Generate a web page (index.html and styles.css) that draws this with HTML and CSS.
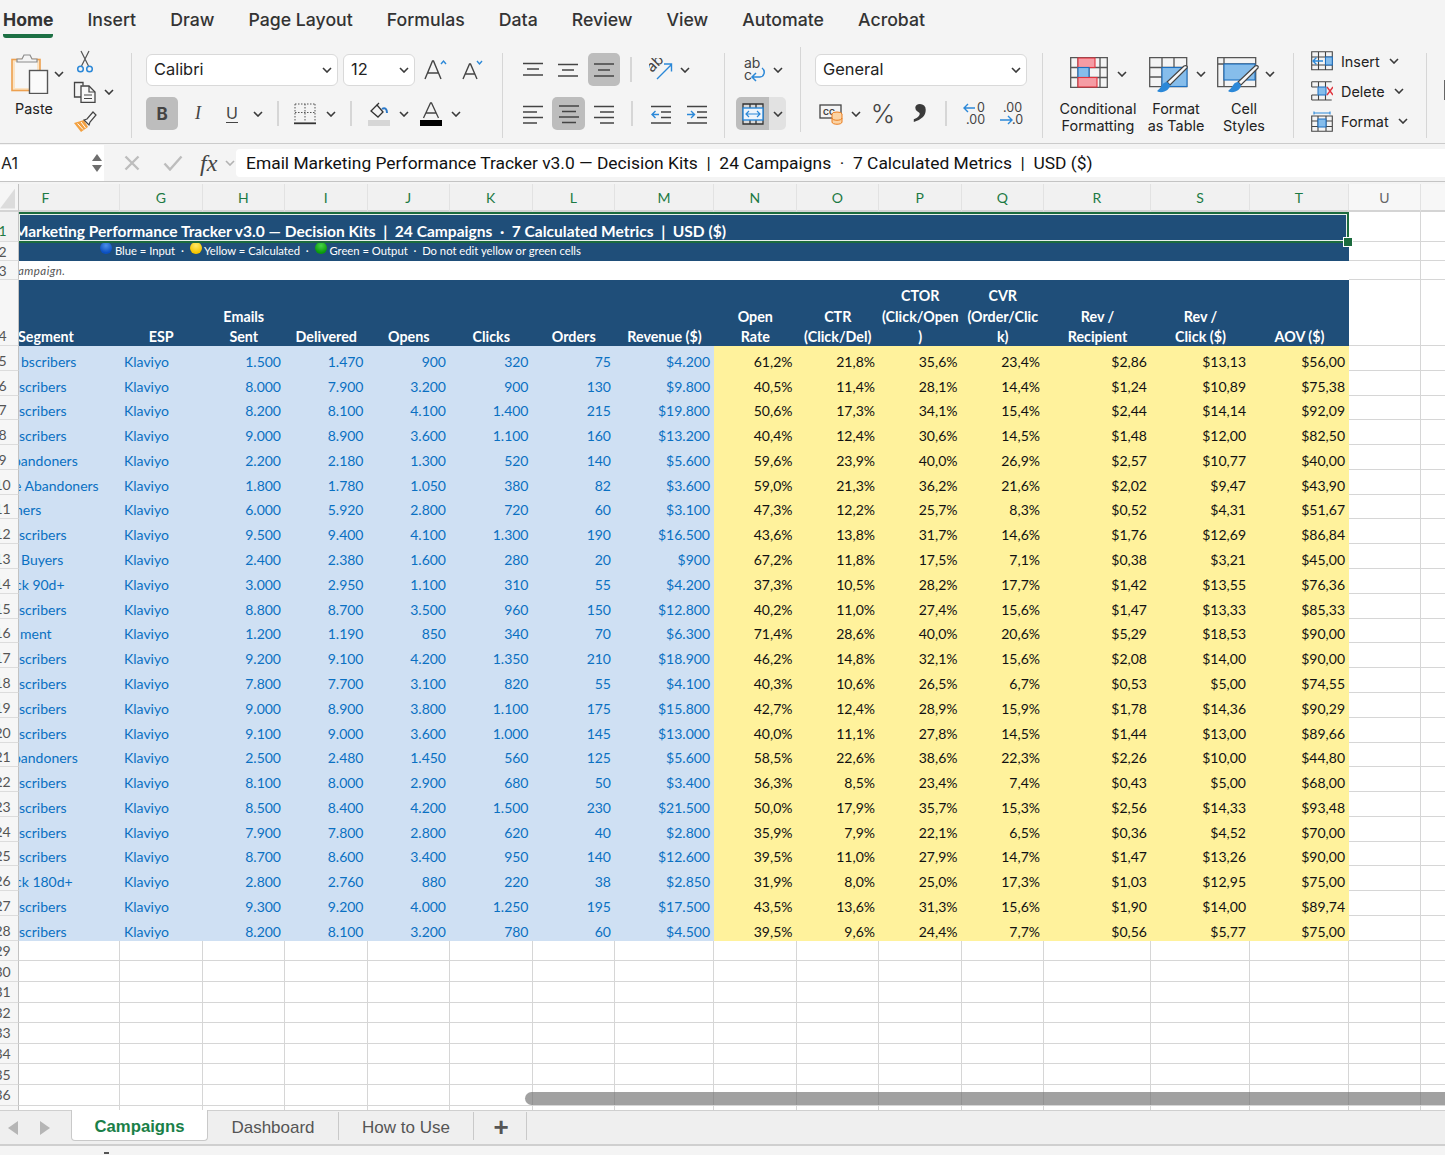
FILE: index.html
```html
<!DOCTYPE html>
<html lang="en">
<head>
<meta charset="utf-8">
<title>Email Marketing Performance Tracker</title>
<link rel="stylesheet" href="styles.css">
</head>
<body>
<svg class="defs" aria-hidden="true"><symbol id="cv" viewBox="0 0 10 6"><path d="M1 1l4 4 4-4" fill="none" stroke="#3a3a3a" stroke-width="1.6"/></symbol></svg>

<nav class="tabs">
  <span class="tab on">Home</span><span class="tab">Insert</span><span class="tab">Draw</span><span class="tab">Page Layout</span><span class="tab">Formulas</span><span class="tab">Data</span><span class="tab">Review</span><span class="tab">View</span><span class="tab">Automate</span><span class="tab">Acrobat</span>
</nav>

<section class="ribbon">
  <div class="grp g-clip">
    <div class="paste">
      <div class="paste-top">
        <svg width="38" height="41" viewBox="0 0 38 41"><rect x="1" y="6.5" width="28" height="31" fill="#fbe3c4" stroke="#eda04f" stroke-width="1.6"/><rect x="4" y="9" width="22" height="26" fill="#f7f7f7"/><path d="M6 9V6h5l2-4h6l2 4h5v3z" fill="#f4f4f4" stroke="#8b8b8b" stroke-width="1.2"/><rect x="18.5" y="17.5" width="18" height="23" fill="#fafafa" stroke="#555" stroke-width="1.4"/></svg>
        <svg class="cv"><use href="#cv"/></svg>
      </div>
      <span class="lbl">Paste</span>
    </div>
    <div class="tools">
      <div class="tool"><svg width="18" height="24" viewBox="0 0 18 24"><path d="M5 1l7.5 15M13 1L5.500 16" fill="none" stroke="#555" stroke-width="1.2"/><circle cx="4.500" cy="19" r="2.800" fill="none" stroke="#2b88d8" stroke-width="1.500"/><circle cx="13.500" cy="19" r="2.800" fill="none" stroke="#2b88d8" stroke-width="1.500"/></svg></div>
      <div class="tool"><svg width="24" height="22" viewBox="0 0 24 22"><path d="M8 16H1.500V1.500H10v3" fill="none" stroke="#444" stroke-width="1.300"/><path d="M8 5h8l6 6v10.500H8z" fill="#f7f7f7" stroke="#444" stroke-width="1.300"/><path d="M16 5v6h6M11 14h8M11 17.500h8" fill="none" stroke="#444" stroke-width="1.200"/></svg><svg class="cv"><use href="#cv"/></svg></div>
      <div class="tool"><svg width="24" height="22" viewBox="0 0 24 22"><path d="M1 12l10-3 4 7-7 5z" fill="#f3a141"/><path d="M4.500 12.500l5.500 6M8 11l4.500 6" stroke="#fff" stroke-width="1"/><path d="M11 9l3-1 6-7 3 3-6 7-1 3z" fill="#f7f7f7" stroke="#444" stroke-width="1.200"/></svg></div>
    </div>
  </div>

  <div class="grp g-font">
    <div class="row font1">
      <div class="sel s192"><span>Calibri</span><svg class="cv"><use href="#cv"/></svg></div>
      <div class="sel"><span>12</span><svg class="cv"><use href="#cv"/></svg></div>
      <div class="ic"><svg width="24" height="24" viewBox="0 0 24 24"><path d="M1 21L8.500 3h1L17 21M4 15h10" fill="none" stroke="#444" stroke-width="1.400"/><path d="M17 6l2.500-3L22 6" fill="none" stroke="#2b88d8" stroke-width="1.400"/></svg></div>
      <div class="ic"><svg width="22" height="22" viewBox="0 0 22 22"><path d="M1 20L7.500 5h1L15 20M3.500 15h9" fill="none" stroke="#444" stroke-width="1.400"/><path d="M15 2l2.500 3L20 2" fill="none" stroke="#2b88d8" stroke-width="1.400"/></svg></div>
    </div>
    <div class="row font2">
      <div class="ic btn"><b class="bold">B</b></div>
      <div class="ic"><i class="ital">I</i></div>
      <div class="ic"><span class="undl">U</span></div>
      <div class="ic"><svg class="cv"><use href="#cv"/></svg></div>
      <div class="ic"><span class="vsep"></span></div>
      <div class="ic"><svg width="22" height="22" viewBox="0 0 22 22"><path d="M1 1h20M1 1v17M21 1v17M11 1v17M1 9.500h20" fill="none" stroke="#555" stroke-dasharray="1.500 1.500"/><path d="M0 20.300h22" stroke="#333" stroke-width="1.800"/></svg></div>
      <div class="ic"><svg class="cv"><use href="#cv"/></svg></div>
      <div class="ic"><span class="vsep"></span></div>
      <div class="ic"><svg width="22" height="24" viewBox="0 0 22 24"><path d="M3 9l6-6 6 7-5 5z" fill="none" stroke="#333" stroke-width="1.300"/><path d="M9 3l2-2" stroke="#333" stroke-width="1.300"/><path d="M14 7c3-2 5 0 5 4" fill="none" stroke="#2b78c8" stroke-width="2"/><rect y="18" width="22" height="6" fill="#d6d6d6"/></svg></div>
      <div class="ic"><svg class="cv"><use href="#cv"/></svg></div>
      <div class="ic"><svg width="22" height="24" viewBox="0 0 22 24"><path d="M3.500 16L10.500 1h1L18.500 16M6 11h10" fill="none" stroke="#444" stroke-width="1.300"/><rect y="18" width="22" height="6" fill="#000"/></svg></div>
      <div class="ic"><svg class="cv"><use href="#cv"/></svg></div>
    </div>
  </div>

  <div class="grp g-align">
    <div class="row al1">
      <div class="ic"><svg class="lines" viewBox="0 0 20 20"><path d="M0 3.500h20M4 9h12M0 15h20"/></svg></div>
      <div class="ic"><svg class="lines" viewBox="0 0 20 20"><path d="M0 4.500h20M4 10h12M0 16h20"/></svg></div>
      <div class="ic btn"><svg class="lines" viewBox="0 0 20 20"><path d="M0 4h20M4 10h12M0 16h20"/></svg></div>
      <div class="ic"><span class="vsep"></span></div>
      <div class="ic"><svg width="24" height="24" viewBox="0 0 24 24"><text class="rot" x="3" y="15" transform="rotate(-45 3 15)">ab</text><path d="M8 21L22 7M15 6h7.500v7.500" fill="none" stroke="#2b88d8" stroke-width="1.400"/></svg></div>
      <div class="ic"><svg class="cv"><use href="#cv"/></svg></div>
    </div>
    <div class="row al2">
      <div class="ic"><svg class="lines" viewBox="0 0 20 20"><path d="M0 2.500h20M0 8h14M0 13.500h20M0 19h14"/></svg></div>
      <div class="ic btn"><svg class="lines" viewBox="0 0 20 20"><path d="M0 2h20M3 7.500h14M0 13h20M3 18.500h14"/></svg></div>
      <div class="ic"><svg class="lines" viewBox="0 0 20 20"><path d="M0 2.500h20M6 8h14M0 13.500h20M6 19h14"/></svg></div>
      <div class="ic"><span class="vsep"></span></div>
      <div class="ic"><svg class="lines" viewBox="0 0 20 20"><path d="M0 2.500h20M10 8h10M10 13.500h10M0 19h20"/><path class="blue" d="M8 10.500H1M4.500 7l-3.500 3.500L4.500 14"/></svg></div>
      <div class="ic"><svg class="lines" viewBox="0 0 20 20"><path d="M0 2.500h20M10 8h10M10 13.500h10M0 19h20"/><path class="blue" d="M0 10.500h7M4 7l3.500 3.500L4 14"/></svg></div>
    </div>
  </div>

  <div class="grp g-wrap">
    <div class="row wr1">
      <div class="ic"><svg width="24" height="26" viewBox="0 0 24 26"><text class="wraptx" x="1" y="11">ab</text><text class="wraptx" x="1" y="23">c</text><path d="M19 11c4 3 2 9-2 9H9M13 16l-4 4 4 4" fill="none" stroke="#2b88d8" stroke-width="1.500"/></svg></div>
      <div class="ic"><svg class="cv"><use href="#cv"/></svg></div>
    </div>
    <div class="row wr2">
      <div class="ic btn merge"><svg width="22" height="22" viewBox="0 0 22 22"><path d="M1 1h20v20H1zM8 1v4M14 1v4M8 17v4M14 17v4" fill="#d9d9d9" stroke="#333" stroke-width="1.300"/><rect x="1" y="5" width="20" height="12" fill="#eef5fc" stroke="#2b88d8" stroke-width="1.400"/><path d="M4 11h14M7 8l-3 3 3 3M15 8l3 3-3 3" fill="none" stroke="#2b88d8" stroke-width="1.200"/></svg></div>
      <div class="ic mergec"><svg class="cv"><use href="#cv"/></svg></div>
    </div>
  </div>

  <div class="grp g-num">
    <div class="row"><div class="sel wide"><span>General</span><svg class="cv"><use href="#cv"/></svg></div></div>
    <div class="row num2">
      <div class="ic"><svg width="24" height="22" viewBox="0 0 24 22"><rect x="1" y="2" width="21" height="13" fill="none" stroke="#444" stroke-width="1.300"/><text class="cur" x="4" y="12">CC</text><ellipse cx="18" cy="11" rx="5" ry="2" fill="#fbd3a4" stroke="#ea7d1e"/><path d="M13 11v8c0 3 10 3 10 0v-8" fill="#fbd3a4" stroke="#ea7d1e"/><path d="M13 15c0 3 10 3 10 0" fill="none" stroke="#ea7d1e"/></svg></div>
      <div class="ic"><svg class="cv"><use href="#cv"/></svg></div>
      <div class="ic"><span class="pct">%</span></div>
      <div class="ic"><svg class="cm" width="12" height="20" viewBox="0 0 12 20"><text class="commatx" x="0" y="9">,</text></svg></div>
      <div class="ic"><span class="vsep"></span></div>
      <div class="ic"><svg width="24" height="24" viewBox="0 0 24 24"><text class="dec" x="15" y="10">0</text><text class="dec" x="4" y="22">.00</text><path d="M13 6H2M6 2L2 6l4 4" fill="none" stroke="#2b88d8" stroke-width="1.400"/></svg></div>
      <div class="ic"><svg width="24" height="24" viewBox="0 0 24 24"><text class="dec" x="4" y="10">.00</text><text class="dec" x="13" y="22">.0</text><path d="M1 18h12M9 14l4 4-4 4" fill="none" stroke="#2b88d8" stroke-width="1.400"/></svg></div>
    </div>
  </div>

  <div class="grp g-styles">
    <div class="stl s-cond">
      <div class="stl-top">
        <svg width="38" height="31" viewBox="0 0 38 31"><path d="M.7.700h36.600v29.600H.7zM.7 10.500h36.600M.7 20.500h36.600M8 .7v29.600M19 .7v29.600M30 .7v29.600" fill="none" stroke="#555" stroke-width="1.300"/><rect x="8" y="1" width="17" height="9.500" fill="#f59ca4" stroke="#e0343e" stroke-width="1.100"/><rect x="8" y="10.500" width="11" height="10" fill="#86bdeb" stroke="#1d6fc0" stroke-width="1.100"/><rect x="8" y="20.500" width="19" height="9.500" fill="#f59ca4" stroke="#e0343e" stroke-width="1.100"/></svg>
        <svg class="cv"><use href="#cv"/></svg>
      </div>
      <span class="lbl">Conditional<br>Formatting</span>
    </div>
    <div class="stl s-tbl">
      <div class="stl-top">
        <svg width="41" height="38" viewBox="0 0 41 38"><path d="M.7.700h37v29h-37zM.7 10.500h37M.7 20h37M13 .7v29M25 .7v29" fill="none" stroke="#555" stroke-width="1.300"/><rect x="13" y="10.500" width="25" height="19" fill="#86bdeb" stroke="#1d6fc0" stroke-width="1.100"/><path d="M38 11L21 28l-3-3L35 9c2-1 4 0 3 2z" fill="#f7f7f7" stroke="#444" stroke-width="1.200"/><path d="M18 25c-4 0-5 4-7 6-1 2-5 3-1 4 6 1 11-3 11-7z" fill="#2b88d8"/></svg>
        <svg class="cv"><use href="#cv"/></svg>
      </div>
      <span class="lbl">Format<br>as Table</span>
    </div>
    <div class="stl s-cell">
      <div class="stl-top">
        <svg width="43" height="38" viewBox="0 0 43 38"><path d="M.7.700h38v29H.7zM.7 7h38M7 .7v29" fill="none" stroke="#555" stroke-width="1.300"/><rect x="7" y="7" width="31" height="16" fill="#86bdeb" stroke="#1d6fc0" stroke-width="1.100"/><path d="M41 11L24 28l-3-3L38 9c2-1 4 0 3 2z" fill="#f7f7f7" stroke="#444" stroke-width="1.200"/><path d="M21 25c-4 0-5 4-7 6-1 2-5 3-1 4 6 1 11-3 11-7z" fill="#2b88d8"/></svg>
        <svg class="cv"><use href="#cv"/></svg>
      </div>
      <span class="lbl">Cell<br>Styles</span>
    </div>
  </div>

  <div class="grp g-cells">
    <div class="tool cell"><svg width="22" height="20" viewBox="0 0 22 20"><path d="M.7.700h20.600v18H.700zM.7 6h20.600M.7 14h20.600M7.500.7v18M14.500.7v18" fill="none" stroke="#444" stroke-width="1.100"/><rect x="14.500" y="6" width="6.800" height="8" fill="#86bdeb" stroke="#1d6fc0"/><path d="M12 10H2M5.500 6.500L2 10l3.500 3.500" fill="#f5f5f5" stroke="#2b88d8" stroke-width="1.400"/></svg><span>Insert</span><svg class="cv"><use href="#cv"/></svg></div>
    <div class="tool cell"><svg width="22" height="20" viewBox="0 0 22 20"><path d="M.7.700h20M.7 19h20M.7.700v5.300M.7 14v5M7.500.7V6M7.500 14v5M14.500.7V6M14.500 14v5M.7 6h6M.7 14h6" fill="none" stroke="#444" stroke-width="1.100"/><rect x="7" y="6" width="8" height="8" fill="#86bdeb" stroke="#1d6fc0"/><path d="M16 6l6 8M22 6l-6 8" stroke="#e0343e" stroke-width="1.400"/></svg><span>Delete</span><svg class="cv"><use href="#cv"/></svg></div>
    <div class="tool cell"><svg width="22" height="21" viewBox="0 0 22 21"><path d="M.7 5h20.600v15.300H.7zM.7 10h20.600M.7 15.500h20.600M7 5v15.300M15 5v15.300" fill="none" stroke="#444" stroke-width="1.100"/><rect x="7" y="8" width="8" height="8" fill="#86bdeb" stroke="#1d6fc0"/><path d="M3 2h16M3 .5v3M19 .5v3" stroke="#2b88d8" stroke-width="1.100"/></svg><span>Format</span><svg class="cv"><use href="#cv"/></svg></div>
  </div>
  <div class="grp-edge"><i class="edge"></i></div>
</section>

<section class="fbar">
  <div class="namebox"><span>A1</span><span class="spin"><i class="up"></i><i class="dn"></i></span></div>
  <div class="fctl">
    <svg width="16" height="16" viewBox="0 0 16 16"><path d="M1.500 1.500l13 13M14.500 1.500l-13 13" stroke="#bdbdbd" stroke-width="2.400"/></svg>
    <svg width="20" height="16" viewBox="0 0 20 16"><path d="M1.500 8.500l5.500 6L18.500 1.500" fill="none" stroke="#bdbdbd" stroke-width="2.400"/></svg>
    <span class="fx">fx</span>
    <svg class="cv lite"><use href="#cv"/></svg>
  </div>
  <div class="ftext">Email Marketing Performance Tracker v3.0 — Decision Kits&nbsp; |&nbsp; 24 Campaigns&nbsp; ·&nbsp; 7 Calculated Metrics&nbsp; |&nbsp; USD ($)</div>
</section>

<main class="sheet">
<table class="grid">
<colgroup><col class="c-rh"><col class="c101"><col class="c83"><col class="c82"><col class="c82"><col class="c83"><col class="c82"><col class="c83"><col class="c99"><col class="c82"><col class="c82"><col class="c83"><col class="c82"><col class="c107"><col class="c99"><col class="c99"><col class="c72"><col class="c25"></colgroup>
<thead>
<tr class="ch"><th class="corner"><span></span><th>F<th>G<th>H<th>I<th>J<th>K<th>L<th>M<th>N<th>O<th>P<th>Q<th>R<th>S<th>T<th class="off">U<th class="off">
</thead>
<tbody>
<tr class="r1"><th class="cur-row">1<td colspan="15" class="navy"><div class="title"><span>Email Marketing Performance Tracker v3.0 — Decision Kits&nbsp; |&nbsp; 24 Campaigns&nbsp; ·&nbsp; 7 Calculated Metrics&nbsp; |&nbsp; USD ($)</span></div><td class="e"><td class="e">
<tr class="r2"><th>2<td colspan="15" class="navy legend"><i class="dot d-blue"></i> Blue = Input &nbsp;·&nbsp; <i class="dot d-yel"></i> Yellow = Calculated &nbsp;·&nbsp; <i class="dot d-grn"></i> Green = Output &nbsp;·&nbsp; Do not edit yellow or green cells<td class="e"><td class="e">
<tr class="r3"><th>3<td colspan="15" class="note">ampaign.<td class="e"><td class="e">
<tr class="hd"><th>4<td class="seg">Segment<td>ESP<td>Emails<br>Sent<td>Delivered<td>Opens<td>Clicks<td>Orders<td>Revenue ($)<td>Open<br>Rate<td>CTR<br>(Click/Del)<td>CTOR<br>(Click/Open<br>)<td>CVR<br>(Order/Clic<br>k)<td>Rev /<br>Recipient<td>Rev /<br>Click ($)<td>AOV ($)<td class="e"><td class="e">
<tr class="d"><th>5<td class="i2">bscribers<td>Klaviyo<td>1.500<td>1.470<td>900<td>320<td>75<td>$4.200<td>61,2%<td>21,8%<td>35,6%<td>23,4%<td>$2,86<td>$13,13<td>$56,00<td class="e"><td class="e">
<tr class="d"><th>6<td>scribers<td>Klaviyo<td>8.000<td>7.900<td>3.200<td>900<td>130<td>$9.800<td>40,5%<td>11,4%<td>28,1%<td>14,4%<td>$1,24<td>$10,89<td>$75,38<td class="e"><td class="e">
<tr class="d"><th>7<td>scribers<td>Klaviyo<td>8.200<td>8.100<td>4.100<td>1.400<td>215<td>$19.800<td>50,6%<td>17,3%<td>34,1%<td>15,4%<td>$2,44<td>$14,14<td>$92,09<td class="e"><td class="e">
<tr class="d"><th>8<td>scribers<td>Klaviyo<td>9.000<td>8.900<td>3.600<td>1.100<td>160<td>$13.200<td>40,4%<td>12,4%<td>30,6%<td>14,5%<td>$1,48<td>$12,00<td>$82,50<td class="e"><td class="e">
<tr class="d"><th>9<td class="i-6">bandoners<td>Klaviyo<td>2.200<td>2.180<td>1.300<td>520<td>140<td>$5.600<td>59,6%<td>23,9%<td>40,0%<td>26,9%<td>$2,57<td>$10,77<td>$40,00<td class="e"><td class="e">
<tr class="d"><th>10<td class="i-5">e Abandoners<td>Klaviyo<td>1.800<td>1.780<td>1.050<td>380<td>82<td>$3.600<td>59,0%<td>21,3%<td>36,2%<td>21,6%<td>$2,02<td>$9,47<td>$43,90<td class="e"><td class="e">
<tr class="d"><th>11<td class="i-4">ners<td>Klaviyo<td>6.000<td>5.920<td>2.800<td>720<td>60<td>$3.100<td>47,3%<td>12,2%<td>25,7%<td>8,3%<td>$0,52<td>$4,31<td>$51,67<td class="e"><td class="e">
<tr class="d"><th>12<td>scribers<td>Klaviyo<td>9.500<td>9.400<td>4.100<td>1.300<td>190<td>$16.500<td>43,6%<td>13,8%<td>31,7%<td>14,6%<td>$1,76<td>$12,69<td>$86,84<td class="e"><td class="e">
<tr class="d"><th>13<td class="i2">Buyers<td>Klaviyo<td>2.400<td>2.380<td>1.600<td>280<td>20<td>$900<td>67,2%<td>11,8%<td>17,5%<td>7,1%<td>$0,38<td>$3,21<td>$45,00<td class="e"><td class="e">
<tr class="d"><th>14<td class="i-4">ck 90d+<td>Klaviyo<td>3.000<td>2.950<td>1.100<td>310<td>55<td>$4.200<td>37,3%<td>10,5%<td>28,2%<td>17,7%<td>$1,42<td>$13,55<td>$76,36<td class="e"><td class="e">
<tr class="d"><th>15<td>scribers<td>Klaviyo<td>8.800<td>8.700<td>3.500<td>960<td>150<td>$12.800<td>40,2%<td>11,0%<td>27,4%<td>15,6%<td>$1,47<td>$13,33<td>$85,33<td class="e"><td class="e">
<tr class="d"><th>16<td class="i1">ment<td>Klaviyo<td>1.200<td>1.190<td>850<td>340<td>70<td>$6.300<td>71,4%<td>28,6%<td>40,0%<td>20,6%<td>$5,29<td>$18,53<td>$90,00<td class="e"><td class="e">
<tr class="d"><th>17<td>scribers<td>Klaviyo<td>9.200<td>9.100<td>4.200<td>1.350<td>210<td>$18.900<td>46,2%<td>14,8%<td>32,1%<td>15,6%<td>$2,08<td>$14,00<td>$90,00<td class="e"><td class="e">
<tr class="d"><th>18<td>scribers<td>Klaviyo<td>7.800<td>7.700<td>3.100<td>820<td>55<td>$4.100<td>40,3%<td>10,6%<td>26,5%<td>6,7%<td>$0,53<td>$5,00<td>$74,55<td class="e"><td class="e">
<tr class="d"><th>19<td>scribers<td>Klaviyo<td>9.000<td>8.900<td>3.800<td>1.100<td>175<td>$15.800<td>42,7%<td>12,4%<td>28,9%<td>15,9%<td>$1,78<td>$14,36<td>$90,29<td class="e"><td class="e">
<tr class="d"><th>20<td>scribers<td>Klaviyo<td>9.100<td>9.000<td>3.600<td>1.000<td>145<td>$13.000<td>40,0%<td>11,1%<td>27,8%<td>14,5%<td>$1,44<td>$13,00<td>$89,66<td class="e"><td class="e">
<tr class="d"><th>21<td class="i-6">bandoners<td>Klaviyo<td>2.500<td>2.480<td>1.450<td>560<td>125<td>$5.600<td>58,5%<td>22,6%<td>38,6%<td>22,3%<td>$2,26<td>$10,00<td>$44,80<td class="e"><td class="e">
<tr class="d"><th>22<td>scribers<td>Klaviyo<td>8.100<td>8.000<td>2.900<td>680<td>50<td>$3.400<td>36,3%<td>8,5%<td>23,4%<td>7,4%<td>$0,43<td>$5,00<td>$68,00<td class="e"><td class="e">
<tr class="d"><th>23<td>scribers<td>Klaviyo<td>8.500<td>8.400<td>4.200<td>1.500<td>230<td>$21.500<td>50,0%<td>17,9%<td>35,7%<td>15,3%<td>$2,56<td>$14,33<td>$93,48<td class="e"><td class="e">
<tr class="d"><th>24<td>scribers<td>Klaviyo<td>7.900<td>7.800<td>2.800<td>620<td>40<td>$2.800<td>35,9%<td>7,9%<td>22,1%<td>6,5%<td>$0,36<td>$4,52<td>$70,00<td class="e"><td class="e">
<tr class="d"><th>25<td>scribers<td>Klaviyo<td>8.700<td>8.600<td>3.400<td>950<td>140<td>$12.600<td>39,5%<td>11,0%<td>27,9%<td>14,7%<td>$1,47<td>$13,26<td>$90,00<td class="e"><td class="e">
<tr class="d"><th>26<td class="i-4">ck 180d+<td>Klaviyo<td>2.800<td>2.760<td>880<td>220<td>38<td>$2.850<td>31,9%<td>8,0%<td>25,0%<td>17,3%<td>$1,03<td>$12,95<td>$75,00<td class="e"><td class="e">
<tr class="d"><th>27<td>scribers<td>Klaviyo<td>9.300<td>9.200<td>4.000<td>1.250<td>195<td>$17.500<td>43,5%<td>13,6%<td>31,3%<td>15,6%<td>$1,90<td>$14,00<td>$89,74<td class="e"><td class="e">
<tr class="d"><th>28<td>scribers<td>Klaviyo<td>8.200<td>8.100<td>3.200<td>780<td>60<td>$4.500<td>39,5%<td>9,6%<td>24,4%<td>7,7%<td>$0,56<td>$5,77<td>$75,00<td class="e"><td class="e">
<tr class="x"><th>29<td><td><td><td><td><td><td><td><td><td><td><td><td><td><td><td><td>
<tr class="x"><th>30<td><td><td><td><td><td><td><td><td><td><td><td><td><td><td><td><td>
<tr class="x"><th>31<td><td><td><td><td><td><td><td><td><td><td><td><td><td><td><td><td>
<tr class="x"><th>32<td><td><td><td><td><td><td><td><td><td><td><td><td><td><td><td><td>
<tr class="x"><th>33<td><td><td><td><td><td><td><td><td><td><td><td><td><td><td><td><td>
<tr class="x"><th>34<td><td><td><td><td><td><td><td><td><td><td><td><td><td><td><td><td>
<tr class="x"><th>35<td><td><td><td><td><td><td><td><td><td><td><td><td><td><td><td><td>
<tr class="x"><th>36<td><td><td><td><td><td><td><td><td><td><td><td><td><td><td><td><td>
<tr class="x"><th><td><td><td><td><td><td><td><td><td><td><td><td><td><td><td><td><td>
</tbody>
</table>
<div class="selbox"><i class="handle"></i></div>
<div class="hscroll"></div>
</main>

<footer class="sheetbar">
  <div class="arrows"><i class="al"></i><i class="ar"></i></div>
  <span class="stab active">Campaigns</span>
  <span class="stab w131">Dashboard</span>
  <span class="stab w135">How to Use</span>
  <span class="stab plus">+</span>
</footer>
<div class="status"><i class="mark"></i></div>
</body>
</html>
```
FILE: styles.css
```css
* { box-sizing: border-box; }
html, body { margin: 0; width: 1445px; height: 1155px; overflow: hidden; background: #f4f4f4; }
body { font-family: Inter, "Noto Sans", sans-serif; color: #222; }
.defs { display: none; }
.cv { width: 10px; height: 6px; display: block; flex: none; }
.cv.lite { opacity: .35; }

/* Ribbon tabs */
.tabs { display: flex; gap: 34.05px; height: 40px; padding-left: 3px; align-items: flex-start; }
.tab { font-size: 17.7px; font-weight: 500; line-height: 22px; padding-top: 9px; color: #333; white-space: nowrap; }
.tab.on { font-weight: 700; font-size: 17.6px; height: 38px; border-bottom: 4px solid #1d7044; border-radius: 0 0 3px 3px; }

/* Ribbon */
.ribbon { display: flex; height: 104px; border-bottom: 1.5px solid #cbcbcb; }
.grp { margin-top: 13px; height: 85px; border-right: 1.5px solid #d6d6d6; flex: none; }
.grp-edge { flex: 1; padding: 40px 0 0 17px; }
.edge { display: block; width: 3px; height: 20px; background: #666; }
.g-clip { width: 132px; display: flex; }
.g-font { width: 371px; padding-left: 14px; }
.g-align { width: 222px; padding-left: 13px; }
.g-wrap { width: 76px; padding-left: 11px; margin-top: 7px; }
.g-wrap .row:first-child { margin-top: 6px; }
.g-num { width: 242px; padding-left: 14px; }
.g-styles { width: 251px; padding-left: 12px; display: flex; }
.g-cells { width: 133px; padding-left: 17px; display: flex; flex-direction: column; gap: 6px; }

.paste { width: 72px; }
.paste-top { display: flex; align-items: center; padding-left: 11px; gap: 5px; height: 41px; }
.lbl { display: block; font-size: 14.4px; line-height: 17px; text-align: center; color: #222; }
.paste .lbl { width: 68px; margin-top: 6px; }
.tools { display: flex; flex-direction: column; gap: 6px; margin-top: -3px; width: 48px; }
.tool { height: 24px; display: flex; align-items: center; gap: 7px; padding-left: 1px; }
.tools .tool:first-child { padding-left: 4px; }

.row { display: grid; height: 33px; align-items: center; }
.row + .row { margin-top: 11px; }
.ic { display: flex; align-items: center; justify-content: center; height: 33px; }
.btn { background: #bdbdbd; border-radius: 5px; }
.vsep { width: 1.5px; height: 25px; background: #d6d6d6; display: block; }

.font1 { grid-template-columns: 197px 72px 42px 32px; }
.s192 { width: 192px; }
.font2 { grid-template-columns: 32px 40px 28px 24px 16px 38px 14px 26px 30px 20px 34px 16px; }
.al1 { grid-template-columns: 34px 36px 34px 22px 38px 10px; }
.al1 .btn { margin-left: 2px; }
.al2 { grid-template-columns: 34px 36px 36px 20px 38px 34px; }
.al2 .btn { margin: 0 1px 0 2px; }
.wr1 { grid-template-columns: 38px 8px; }
.wr2 { grid-template-columns: 33px 17px; }
.num2 { grid-template-columns: 32px 18px 36px 36px 18px 38px 36px; }

.sel { height: 32px; background: #fff; border: 1.5px solid #d9d9d9; border-radius: 6px; display: flex; align-items: center; justify-content: space-between; padding: 0 5px 1px 7px; font-size: 16.4px; color: #222; }
.sel .cv { margin-top: 2px; }
.sel.wide { width: 212px; }

.lines { width: 20px; height: 20px; }
.lines path { fill: none; stroke: #444; stroke-width: 1.4; }
.lines .blue { stroke: #2b88d8; }
.bold { font-size: 17px; color: #444; }
.ital { font: italic 18px "Liberation Serif", serif; color: #444; }
.undl { font-size: 16px; color: #444; border-bottom: 1.5px solid #444; line-height: 17px; }
.rot { font: 15px Inter, sans-serif; fill: #444; }
.wraptx { font: 14px Inter, sans-serif; fill: #444; }
.cur { font: 700 8px Inter, sans-serif; fill: #444; }
.pct { font-size: 26px; font-weight: 300; color: #444; }
.cm { overflow: visible; }
.commatx { font: 700 60px "Liberation Serif", serif; fill: #3a3a3a; }
.dec { font: 12.5px Inter, sans-serif; fill: #444; }
.merge { border-radius: 5px 0 0 5px; }
.mergec { background: #e2e2e2; border-radius: 0 5px 5px 0; }

.stl-top { display: flex; align-items: flex-start; justify-content: center; height: 42px; padding-top: 4px; }
.stl-top .cv { margin-top: 14px; }
.stl .lbl { margin-top: 5px; }
.s-cond { width: 86px; }
.s-cond .stl-top { gap: 9px; }
.s-tbl { width: 70px; }
.s-tbl .stl-top { gap: 6px; padding-left: 2px; }
.s-cell { width: 66px; }
.s-cell .stl-top { gap: 5px; padding-left: 4px; }

.cell { padding-left: 0; gap: 8px; font-size: 14.4px; }
.cell:first-child { margin-top: -4px; }
.cell .cv { margin-left: 1px; }

/* Formula bar */
.fbar { display: flex; height: 38px; background: #f4f4f4; border-bottom: 1.5px solid #c4c4c4; padding-top: 1px; }
.namebox { width: 104px; background: #fff; display: flex; align-items: center; justify-content: space-between; padding: 0 2px 0 1px; font-size: 16px; color: #222; }
.spin { display: flex; flex-direction: column; gap: 4px; }
.spin i { display: block; width: 0; height: 0; border-left: 5px solid transparent; border-right: 5px solid transparent; }
.up { border-bottom: 7px solid #6e6e6e; }
.dn { border-top: 7px solid #6e6e6e; }
.fctl { width: 132px; display: flex; align-items: center; padding-left: 20px; gap: 23px; }
.fx { font: italic 24px "Liberation Serif", serif; color: #444; margin-left: -6px; margin-right: -15px; }
.ftext { flex: 1; background: #fff; margin: 4px 0 4px 0; border-radius: 4px 0 0 4px; padding-left: 10px; font-family: Roboto, sans-serif; font-size: 17.42px; line-height: 28.5px; color: #111; white-space: nowrap; }

/* Sheet */
.sheet { position: relative; height: 926px; margin-top: 2px; overflow: hidden; background: #fff; }
.grid { border-collapse: separate; border-spacing: 0; table-layout: fixed; width: 1445px; font-family: Lato, sans-serif; font-size: 14px; }
.c-rh { width: 19px; } .c101 { width: 101px; } .c83 { width: 82.5px; } .c82 { width: 82.5px; } .c99 { width: 99px; } .c107 { width: 107px; } .c72 { width: 72px; } .c25 { width: 25px; }
th, td { padding: 0; overflow: hidden; white-space: nowrap; }
th { background: #f6f6f6; font-weight: 400; color: #555; font-size: 14px; text-align: center; text-indent: -13px; border-right: 1.5px solid #c2c2c2; border-bottom: 1px solid #dcdcdc; }
.ch th { height: 28px; background: #f1f1f1; color: #1c7a44; text-indent: 0; border-right: 1.5px solid #e2e2e2; border-bottom: 2px solid #d4d4d4; }
.ch th:nth-child(2) { text-indent: -47px; }
.ch th.off { color: #666; background: #f7f7f7; }
.ch th.corner { border-right: 1.5px solid #c2c2c2; background: #f6f6f6; }
.corner span { display: block; width: 15px; height: 20px; background: #dcdcdc; clip-path: polygon(100% 0, 100% 100%, 0 100%); margin-top: 3px; }
.cur-row { color: #1c7a44; background: #f1f1f1; }
.e { border-right: 1.5px solid #d6d6d6; border-bottom: 1.5px solid #d6d6d6; }
.r1 th, .r1 td { height: 30px; }
.r1 th { vertical-align: bottom; line-height: 20px; }
.r2 th, .r2 td { height: 19px; }
.r3 th, .r3 td { height: 19px; }
.hd th, .hd td { height: 66px; }
.hd th { vertical-align: bottom; line-height: 18px; }
.d th, .d td { height: 24.79px; }
.d th { vertical-align: bottom; line-height: 19px; }
.x th, .x td { height: 20.6px; }
.x td { border-right: 1.5px solid #d6d6d6; border-bottom: 1.5px solid #d6d6d6; }

.navy { background: #1f4e79; color: #fff; }
.title { display: flex; justify-content: flex-end; width: 707px; overflow: hidden; font-weight: 700; font-size: 15.55px; padding-top: 8px; }
.title span { flex: none; }
.legend { font-size: 11.25px; line-height: 14px; padding: 0 0 3px 81px; vertical-align: middle; }
.dot { display: inline-block; width: 12px; height: 12px; border-radius: 50%; vertical-align: 1px; }
.d-blue { background: radial-gradient(circle at 50% 30%, #4b8fe8, #0b4fc0 70%); }
.d-yel { background: radial-gradient(circle at 50% 30%, #ffe96a, #f5c400 70%); }
.d-grn { background: radial-gradient(circle at 50% 30%, #48d348, #0a9a0a 70%); }
.note { font-style: italic; font-size: 11.5px; color: #555; letter-spacing: .45px; background: #fff; text-indent: -1px; }

.hd td { background: #1f4e79; color: #fff; font-weight: 700; font-size: 14.3px; line-height: 20.6px; text-align: center; vertical-align: bottom; }
.hd td::after { content: ""; display: block; margin-top: -1.7px; }
.hd td.seg { text-align: left; text-indent: -1px; }
.hd td.e { background: #fff; }

.d td { vertical-align: bottom; line-height: 19px; padding: 0 4px 0 0; text-align: right; background: #fff29c; color: #111; }
.d td:nth-child(n+2):nth-child(-n+9) { background: #cfe0f3; color: #0a70c2; }
.d td:nth-child(2), .d td:nth-child(3) { text-align: left; padding: 0; }
.d td:nth-child(3) { padding-left: 4px; }
.d td.e { background: #fff; padding: 0; }
.i2 { text-indent: 2px; } .i1 { text-indent: 1px; } .i-4 { text-indent: -4px; } .i-5 { text-indent: -5px; } .i-6 { text-indent: -6px; }

.selbox { position: absolute; left: 19px; top: 28px; width: 1330px; height: 31px; border: 2.5px solid #1c6b3e; border-left: 0; box-shadow: inset 0 0 0 1px #e8f0ea; }
.handle { position: absolute; right: -5px; bottom: -5px; width: 8px; height: 8px; background: #1c6b3e; outline: 1px solid #fff; }
.hscroll { position: absolute; left: 525px; top: 908px; right: 0; height: 13px; background: rgba(110,110,110,.65); border-radius: 7px 0 0 7px; }

/* Sheet tabs */
.sheetbar { height: 36px; background: #efefef; border-top: 1px solid #cfcfcf; border-bottom: 2px solid #cfcfcf; display: flex; align-items: flex-start; }
.arrows { width: 71px; height: 33px; display: flex; align-items: center; gap: 22px; padding-left: 8px; }
.arrows i { display: block; width: 0; height: 0; border-top: 7px solid transparent; border-bottom: 7px solid transparent; }
.al { border-right: 10px solid #b5b5b5; }
.ar { border-left: 10px solid #b5b5b5; }
.stab { display: flex; align-items: center; justify-content: center; font: 17px "Liberation Sans", sans-serif; color: #555; border-right: 1px solid #c9c9c9; height: 28px; padding-top: 3px; margin-top: 1px; }
.stab.active { width: 137px; background: #fff; color: #1a8048; font-weight: 700; font-size: 16.7px; height: 31px; margin-top: -1px; padding-top: 3px; border: 1px solid #c9c9c9; border-top: 0; border-radius: 0 0 4px 4px; }
.w131 { width: 131px; }
.w135 { width: 135px; }
.plus { width: 53px; font-size: 26px; font-weight: 700; padding-left: 2px; }
.status { height: 9px; background: #f4f4f4; padding: 6px 0 0 104px; }
.mark { display: block; width: 5px; height: 2px; background: #555; }
```
